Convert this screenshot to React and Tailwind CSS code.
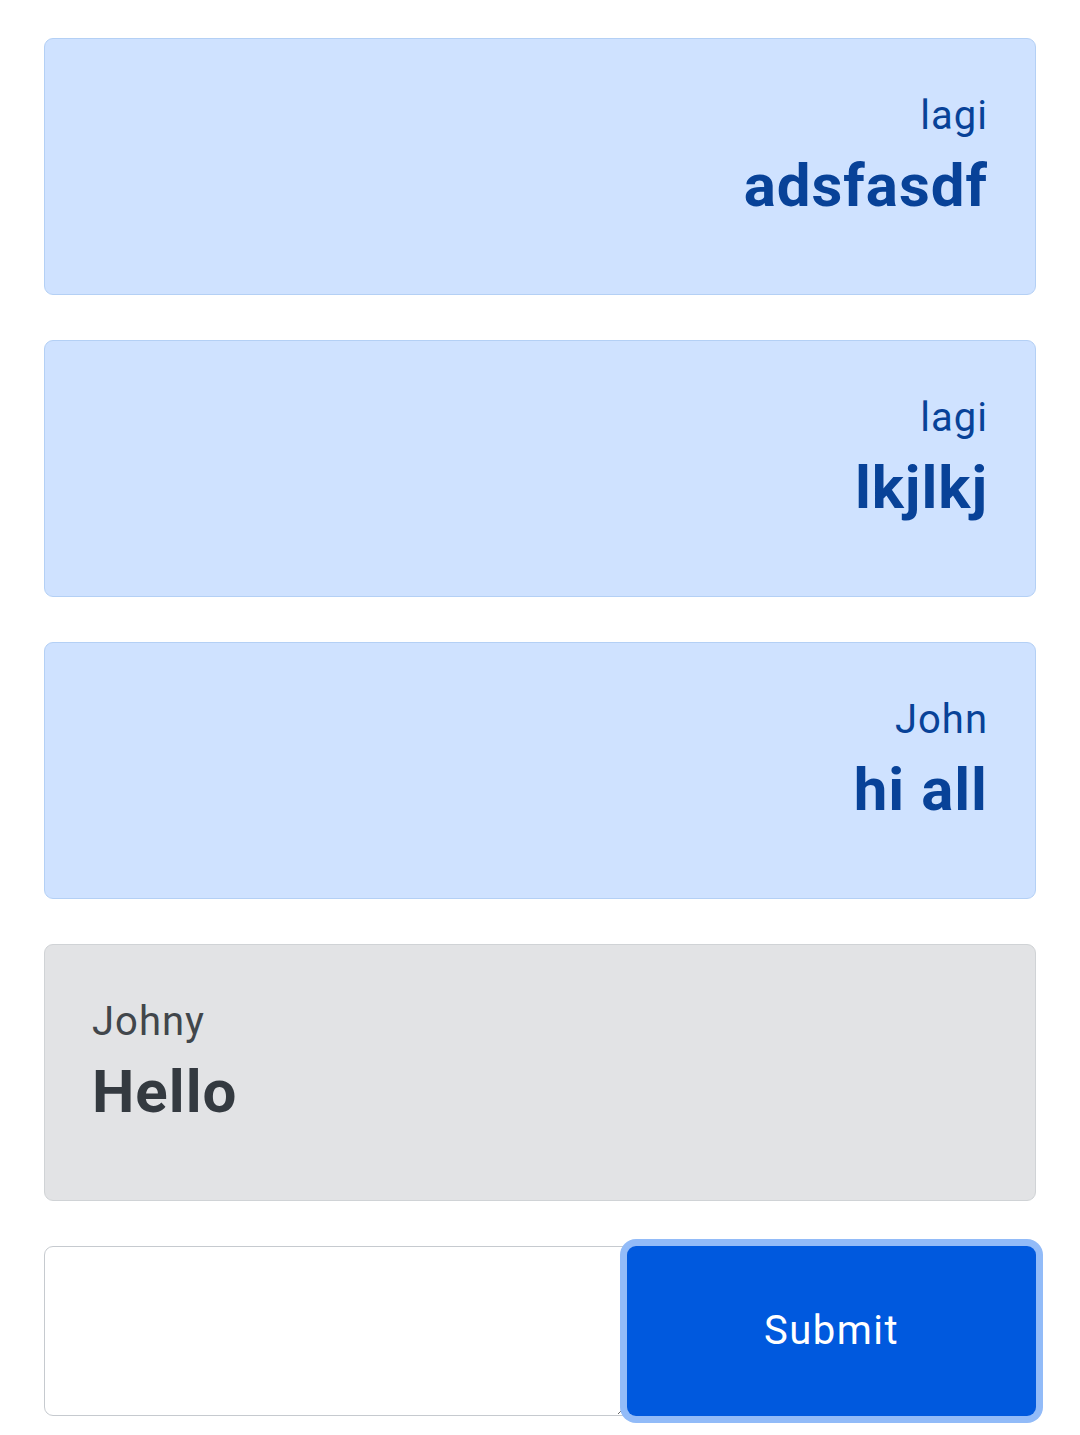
import React from "react";

const messages = [
  { name: "lagi", text: "adsfasdf", mine: true },
  { name: "lagi", text: "lkjlkj", mine: true },
  { name: "John", text: "hi all", mine: true },
  { name: "Johny", text: "Hello", mine: false },
];

export default function App() {
  return (
    <div
      className="min-h-[1435px] bg-white px-[44px] pt-[38px]"
      style={{ fontFamily: "Roboto, 'Liberation Sans', sans-serif" }}
    >
      <div className="flex flex-col gap-[45px]">
        {messages.map((m, i) => (
          <div
            key={i}
            className={`h-[257px] rounded-[9px] border px-[47px] pt-[48px] ${
              m.mine
                ? "bg-[#cfe2ff] border-[#b4d0f5] text-[#084298] text-right"
                : "bg-[#e2e3e5] border-[#d0d3d6] text-[#41464b] text-left"
            }`}
          >
            <p className="text-[40px] leading-[58px] tracking-[1px]">{m.name}</p>
            <h3
              className={`mt-[6px] text-[60px] leading-[69px] font-bold tracking-[1px] ${
                m.mine ? "" : "text-[#343a40]"
              }`}
            >
              {m.text}
            </h3>
          </div>
        ))}
      </div>

      {/* Message form */}
      <div className="mt-[45px] flex h-[170px]">
        <textarea className="w-[583px] h-full rounded-l-[9px] border border-[#c6cacf] bg-white outline-none" />
        <button className="flex-1 h-full rounded-[9px] bg-[#0059de] text-white text-[40px] tracking-[1.5px] shadow-[0_0_0_7px_#92bbf8] relative">
          Submit
        </button>
      </div>
    </div>
  );
}
